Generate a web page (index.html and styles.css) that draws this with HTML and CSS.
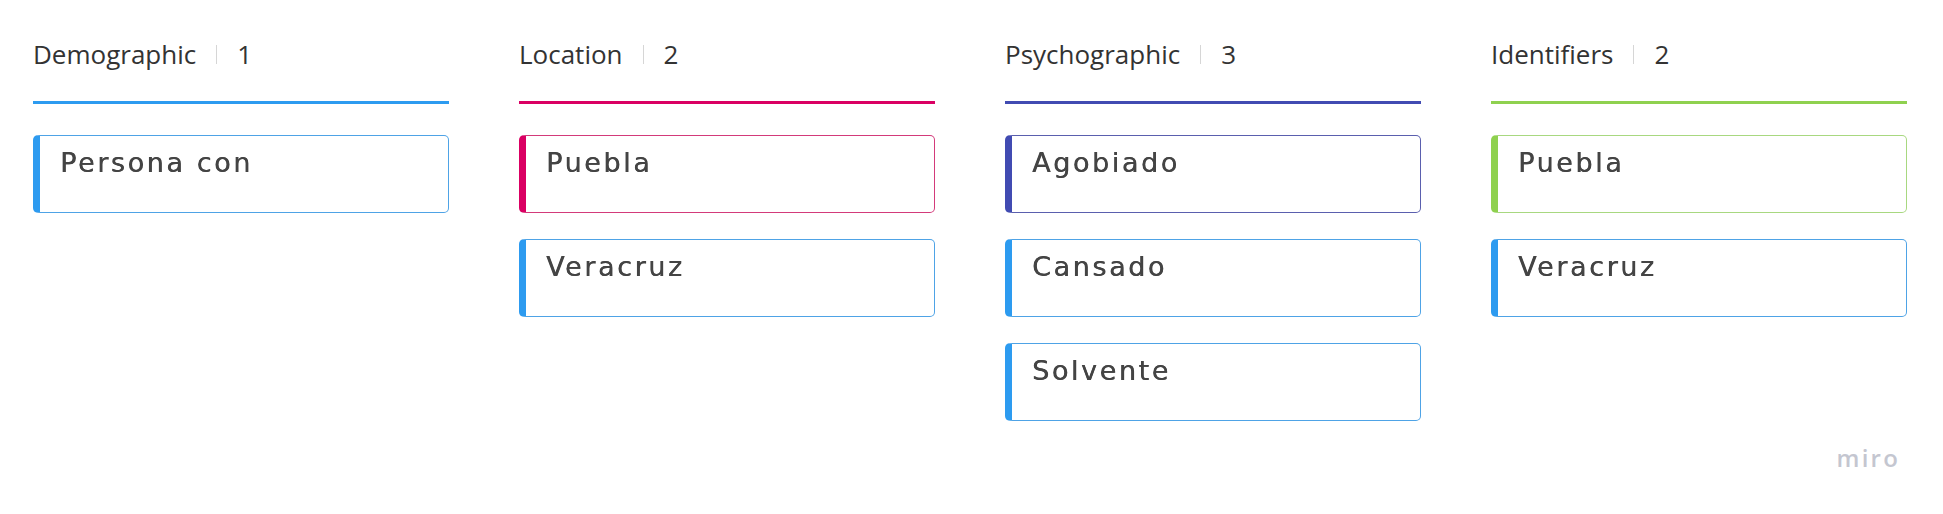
FILE: index.html
```html
<!DOCTYPE html>
<html>
<head>
<meta charset="utf-8">
<link rel="stylesheet" href="styles.css">
</head>
<body>
<div class="board">
  <section class="col col-blue">
    <header class="col-head"><span class="col-title">Demographic</span><span class="sep"></span><span class="col-count">1</span></header>
    <div class="rule"></div>
    <div class="cards">
      <div class="card card-blue"><span class="card-text">Persona con</span></div>
    </div>
  </section>
  <section class="col col-pink">
    <header class="col-head"><span class="col-title">Location</span><span class="sep"></span><span class="col-count">2</span></header>
    <div class="rule"></div>
    <div class="cards">
      <div class="card card-pink"><span class="card-text">Puebla</span></div>
      <div class="card card-blue"><span class="card-text">Veracruz</span></div>
    </div>
  </section>
  <section class="col col-purple">
    <header class="col-head"><span class="col-title">Psychographic</span><span class="sep"></span><span class="col-count">3</span></header>
    <div class="rule"></div>
    <div class="cards">
      <div class="card card-purple"><span class="card-text">Agobiado</span></div>
      <div class="card card-blue"><span class="card-text">Cansado</span></div>
      <div class="card card-blue"><span class="card-text">Solvente</span></div>
    </div>
  </section>
  <section class="col col-green">
    <header class="col-head"><span class="col-title">Identifiers</span><span class="sep"></span><span class="col-count">2</span></header>
    <div class="rule"></div>
    <div class="cards">
      <div class="card card-green"><span class="card-text">Puebla</span></div>
      <div class="card card-blue"><span class="card-text">Veracruz</span></div>
    </div>
  </section>
</div>
<div class="logo">miro</div>
</body>
</html>
```
FILE: styles.css
```css
html, body {
  margin: 0;
  padding: 0;
  background: #ffffff;
}
body {
  width: 1943px;
  height: 514px;
  position: relative;
  overflow: hidden;
  font-family: "Open Sans", "Noto Sans", sans-serif;
}
.board {
  display: flex;
  gap: 70px;
  padding: 37px 0 0 33px;
}
.col {
  width: 416px;
  display: flex;
  flex-direction: column;
}
.col-head {
  display: flex;
  align-items: center;
  height: 34px;
  font-size: 26px;
  line-height: 34px;
  color: #333333;
}
.sep {
  width: 1px;
  height: 19px;
  background: #d6d6d6;
  margin: 0 20px 0 20px;
}
.rule {
  height: 3px;
  margin-top: 30px;
}
.col-blue .rule { background: #2d9bf0; }
.col-pink .rule { background: #da0063; }
.col-purple .rule { background: #414bb2; }
.col-green .rule { background: #8fd14f; }
.cards {
  margin-top: 31px;
  display: flex;
  flex-direction: column;
  gap: 26px;
}
.card {
  height: 78px;
  box-sizing: border-box;
  border: 1px solid;
  border-left-width: 7px;
  border-radius: 5px;
  padding: 11px 0 0 20px;
}
.card-blue { border-color: #4ea3e6; border-left-color: #2d9bf0; }
.card-pink { border-color: #d33a7a; border-left-color: #da0063; }
.card-purple { border-color: #5a5fae; border-left-color: #414bb2; }
.card-green { border-color: #a8d880; border-left-color: #8fd14f; }
.card-text {
  font-family: "DejaVu Sans", sans-serif;
  font-size: 27px;
  color: #444444;
  filter: blur(0.7px);
  text-shadow: 0.4px 0 0 #444444;
  display: inline-block;
  letter-spacing: 2.6px;
}
.logo {
  position: absolute;
  right: 43px;
  bottom: 40px;
  font-family: "Open Sans", sans-serif;
  font-weight: 600;
  font-size: 24px;
  letter-spacing: 2.2px;
  color: #c4c6d0;
}
```
